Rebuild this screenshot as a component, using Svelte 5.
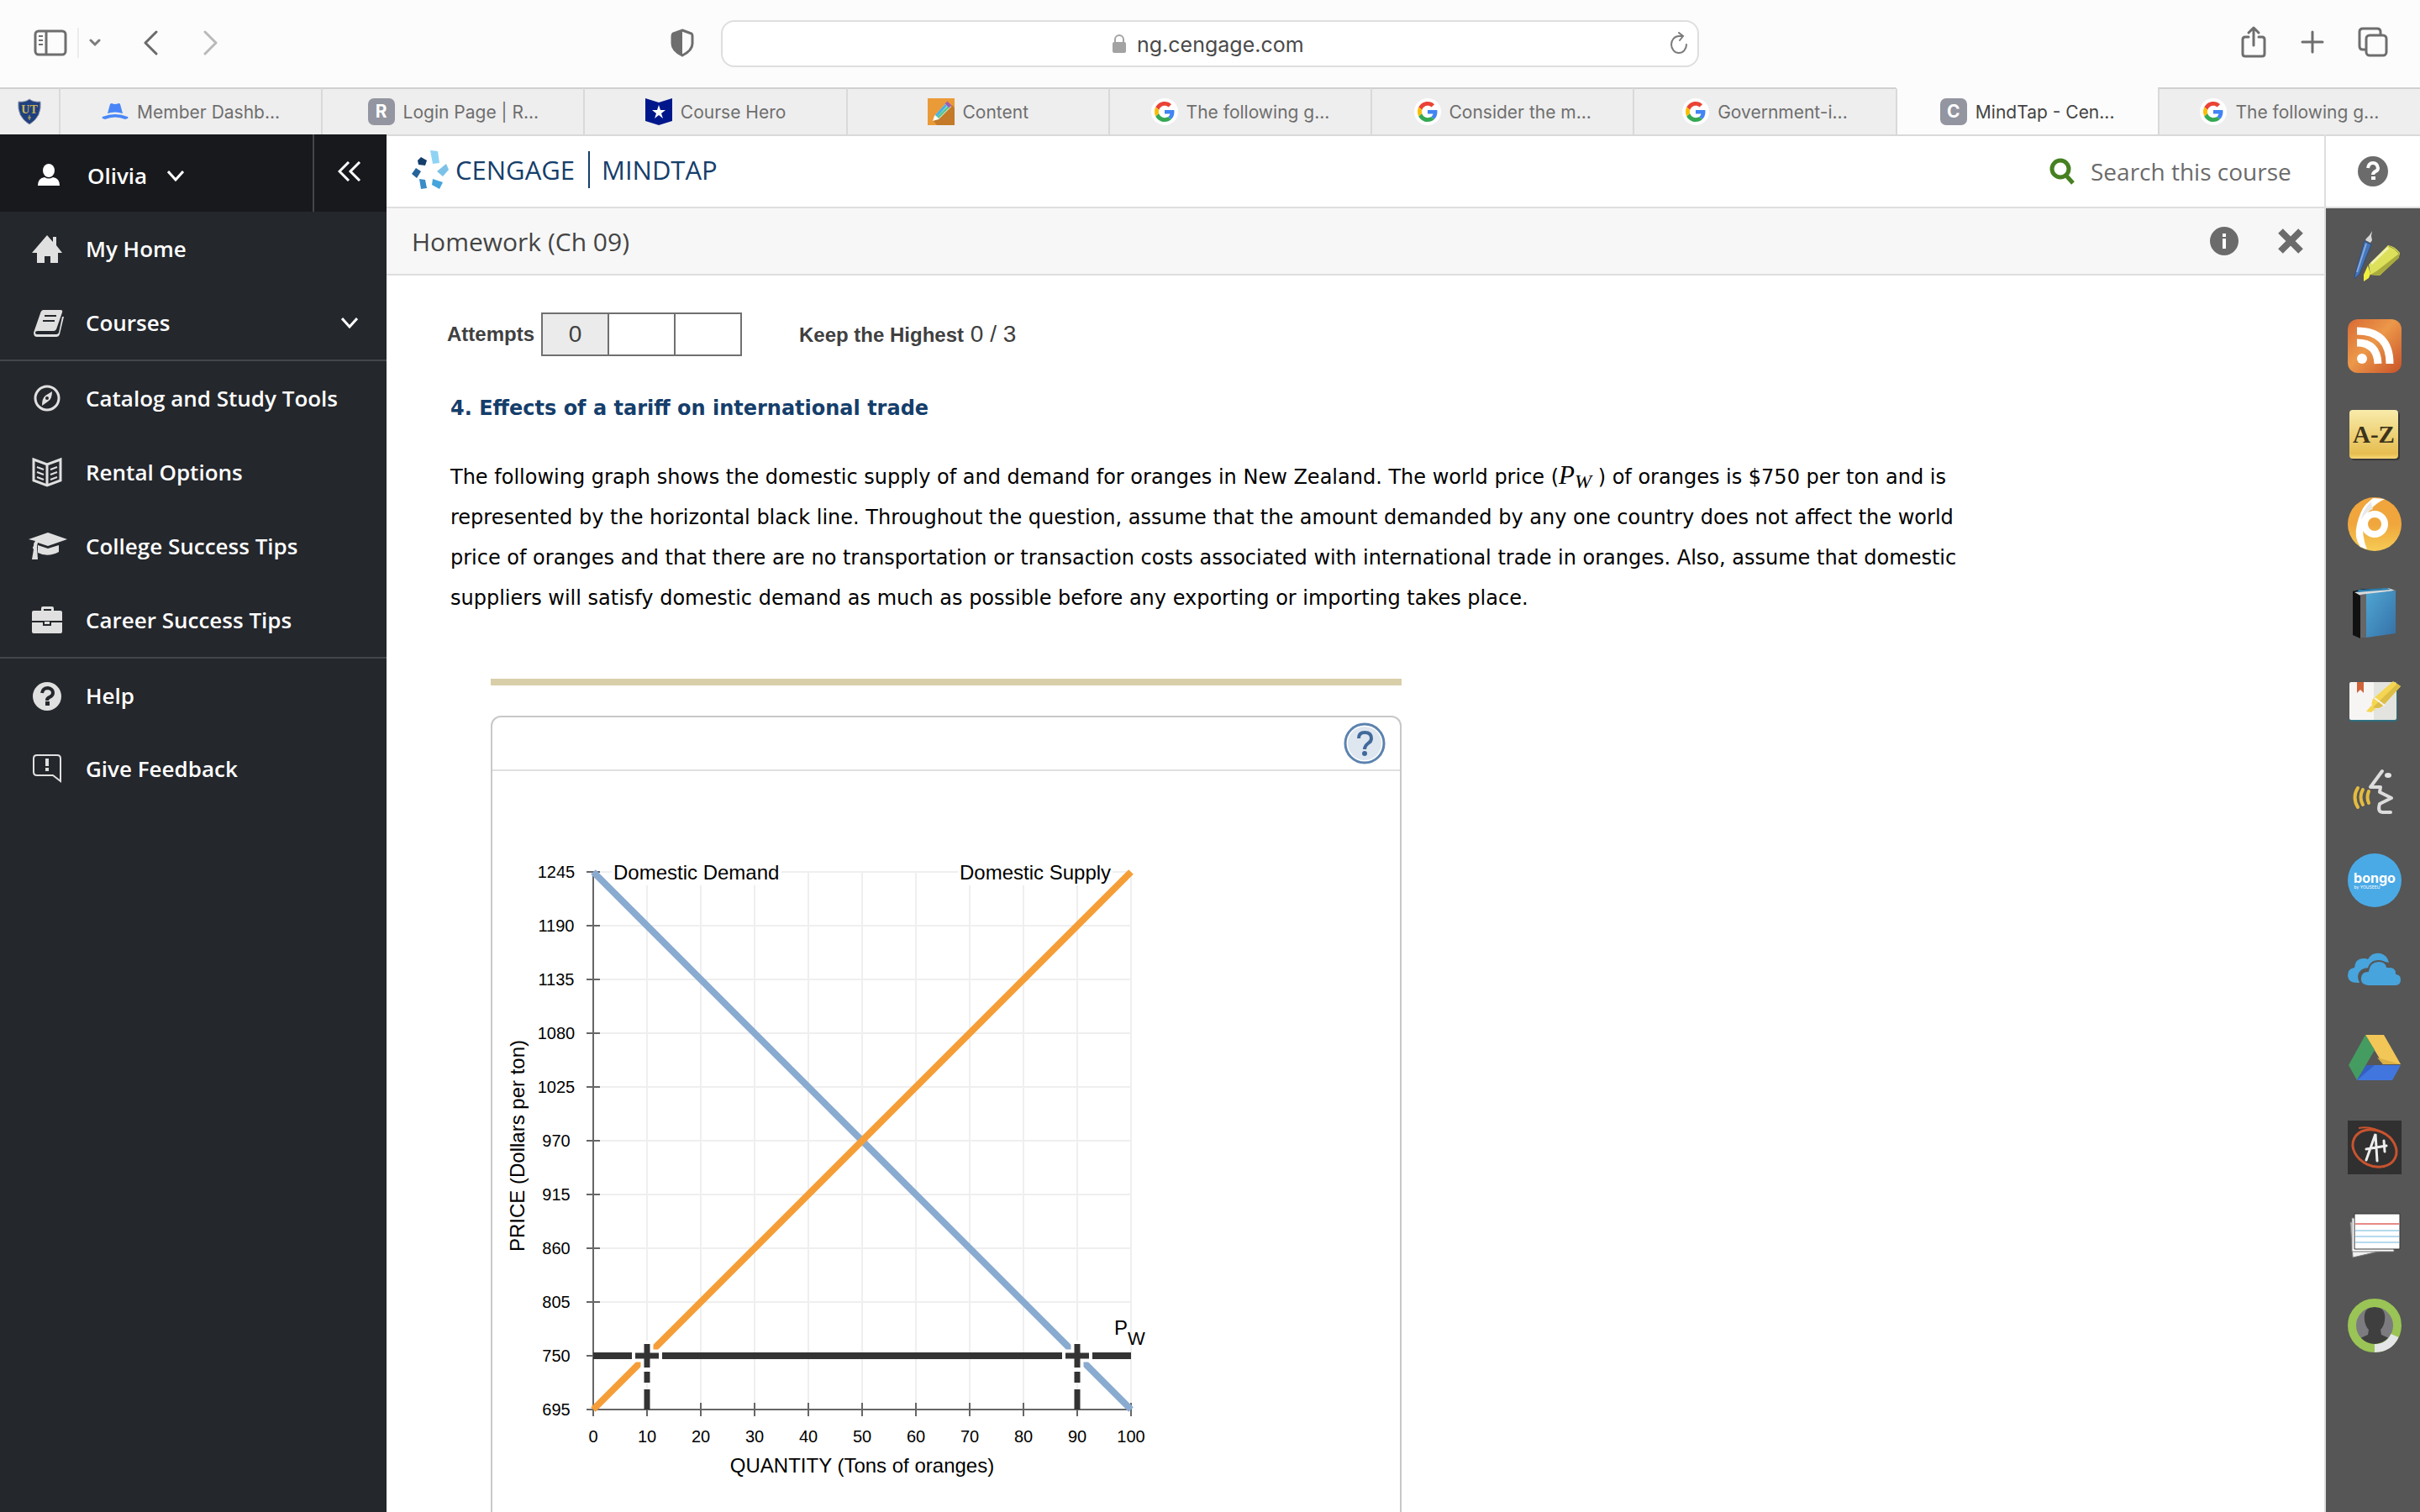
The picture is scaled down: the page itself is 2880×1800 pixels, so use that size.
<script>
  let url = $state('ng.cengage.com');
  let search = $state('');

  const tabs = [
    { icon: 'hat', title: 'Member Dashb...' },
    { icon: 'letter', letter: 'R', title: 'Login Page | R...' },
    { icon: 'hero', title: 'Course Hero' },
    { icon: 'pencil', title: 'Content' },
    { icon: 'google', title: 'The following g...' },
    { icon: 'google', title: 'Consider the m...' },
    { icon: 'google', title: 'Government-i...' },
    { icon: 'letter', letter: 'C', title: 'MindTap - Cen...', active: true },
    { icon: 'google', title: 'The following g...' },
  ];

  const navGroups = [
    [
      { icon: 'home', label: 'My Home' },
      { icon: 'book', label: 'Courses', expandable: true },
    ],
    [
      { icon: 'compass', label: 'Catalog and Study Tools' },
      { icon: 'openbook', label: 'Rental Options' },
      { icon: 'cap', label: 'College Success Tips' },
      { icon: 'case', label: 'Career Success Tips' },
    ],
    [
      { icon: 'help', label: 'Help' },
      { icon: 'feedback', label: 'Give Feedback' },
    ],
  ];

  const tools = ['highlighter', 'rss', 'az', 'swirl', 'bluebook', 'notebook', 'speech', 'bongo', 'onedrive', 'gdrive', 'grade', 'cards', 'profile'];

  // chart scale: 64 units per step on both axes
  const left = 120;
  const top = 120;
  const step = 64;
  const size = step * 10;
  const bottom = top + size;
  const right = left + size;
  const steps = Array.from({ length: 11 }, (_, i) => i);
  const xAt = (q) => left + (q / 100) * size;
  const yAt = (p) => bottom - ((p - 695) / 550) * size;
  const crossings = [10, 90];
</script>

<div class="window">
  <header class="toolbar">
    <div class="tools-left">
      <button class="plain" aria-label="Sidebar">
        <svg width="40" height="32" viewBox="0 0 40 32" fill="none" stroke="#6e6e6e" stroke-width="3">
          <rect x="2" y="2" width="36" height="28" rx="4" />
          <path d="M15 2v28" />
          <path d="M6 8h5M6 13h5M6 18h5" stroke-width="2" />
        </svg>
      </button>
      <i class="tool-sep"></i>
      <button class="plain" aria-label="Tab groups">
        <svg width="14" height="10" viewBox="0 0 14 10" fill="none" stroke="#7c7c7c" stroke-width="3" stroke-linecap="round"><path d="M2 2l5 5 5-5" /></svg>
      </button>
      <button class="plain back" aria-label="Back">
        <svg width="18" height="30" viewBox="0 0 18 30" fill="none" stroke="#6a6a6a" stroke-width="3" stroke-linecap="round" stroke-linejoin="round"><path d="M16 2L3 15l13 13" /></svg>
      </button>
      <button class="plain forward" aria-label="Forward">
        <svg width="18" height="30" viewBox="0 0 18 30" fill="none" stroke="#b9b9b9" stroke-width="3" stroke-linecap="round" stroke-linejoin="round"><path d="M2 2l13 13L2 28" /></svg>
      </button>
      <button class="plain shield" aria-label="Privacy report">
        <svg width="28" height="34" viewBox="0 0 28 34">
          <path d="M14 2l11 4q1 1 1 3v9q0 8-12 14Q2 26 2 18V9q0-2 1-3z" fill="none" stroke="#6e6e6e" stroke-width="3" />
          <path d="M14 1L2 6v13q0 7 12 13z" fill="#6e6e6e" />
        </svg>
      </button>
    </div>
    <form class="address">
      <svg width="18" height="24" viewBox="0 0 18 24">
        <path d="M4 11V7a5 5 0 0 1 10 0v4" fill="none" stroke="#a3a3a3" stroke-width="2" />
        <rect x="1" y="10" width="16" height="13" rx="2" fill="#a3a3a3" />
      </svg>
      <input class="url" aria-label="Address" bind:value={url} />
      <button class="plain reload" type="button" aria-label="Reload">
        <svg width="24" height="28" viewBox="0 0 24 28" fill="none" stroke="#7a7a7a" stroke-width="2" stroke-linecap="round"><path d="M21 15a9 10 0 1 1-9-10h4M12 1l5 4-4 5" /></svg>
      </button>
    </form>
    <div class="tools-right">
      <button class="plain" aria-label="Share">
        <svg width="32" height="40" viewBox="0 0 32 40" fill="none" stroke="#6e6e6e" stroke-width="3" stroke-linecap="round" stroke-linejoin="round"><path d="M10 14H6q-3 0-3 3v17q0 3 3 3h20q3 0 3-3V17q0-3-3-3h-4M16 24V3M10 9l6-6 6 6" /></svg>
      </button>
      <button class="plain" aria-label="New tab">
        <svg width="28" height="28" viewBox="0 0 28 28" fill="none" stroke="#6e6e6e" stroke-width="3" stroke-linecap="round"><path d="M14 2v24M2 14h24" /></svg>
      </button>
      <button class="plain" aria-label="Tab overview">
        <svg width="36" height="36" viewBox="0 0 36 36" fill="none" stroke="#6e6e6e" stroke-width="3"><path d="M9 27H6q-4 0-4-4V6q0-4 4-4h17q4 0 4 4v3" /><rect x="10" y="10" width="24" height="24" rx="4" /></svg>
      </button>
    </div>
  </header>

  <nav class="tabs" aria-label="Tabs">
    <a href="#pinned" class="pinned" aria-label="UT">
      <svg width="30" height="32" viewBox="0 0 30 32">
        <path d="M15 1q5 4 13 3 2 18-13 27Q0 22 2 4q8 1 13-3z" fill="#20407f" stroke="#8a93a8" />
        <text x="15" y="18" text-anchor="middle" font-family="Liberation Serif, serif" font-weight="700" font-size="14" fill="#c9b458">UT</text>
        <path d="M15 20v6M13 23h4" stroke="#c9b458" />
      </svg>
    </a>
    {#each tabs as tab, i}
      <a href="#tab{i}" class="tab" class:active={tab.active}>
        {#if tab.icon === 'letter'}
          <span class="letter">{tab.letter}</span>
        {:else}
          <svg width="32" height="32" viewBox="0 0 32 32">
            {#if tab.icon === 'hat'}
              <path d="M7 18l3-11q1-1 2-1 4 2 8 0 2 0 2 1l3 11q-9-3-18 0z" fill="#4a86f7" />
              <path d="M1 22q15-6 30 0 1 1 0 2l-3 1q-12-5-24 0l-3-1q-1-1 0-2z" fill="#4a86f7" />
            {:else if tab.icon === 'hero'}
              <path d="M0 0l16 5 16-5v27l-16 5-16-5z" fill="#00178c" />
              <path d="M16 8l2 6h6l-5 4 2 6-5-4-5 4 2-6-5-4h6z" fill="#fff" />
            {:else if tab.icon === 'pencil'}
              <path d="M0 0h32v32H0z" fill="#eb9a38" />
              <path d="M6 26L29 8l3 3v21H11z" fill="#c47a28" />
              <path d="M8 21L23 5l5 5-15 15-7 2z" fill="#fff" />
              <path d="M10 21L22 8" stroke="#45aee8" stroke-width="3" />
              <path d="M12 23L25 10" stroke="#58c58c" stroke-width="3" />
              <path d="M22 5l5 5" stroke="#9a5fb8" stroke-width="4" />
            {:else}
              <circle cx="16" cy="16" r="16" fill="#fff" />
              <g transform="translate(4 4) scale(.5)">
                <path fill="#ea4335" d="M24 9.500c3.540 0 6.710 1.220 9.210 3.600l6.850-6.850C35.900 2.380 30.470 0 24 0 14.620 0 6.510 5.380 2.560 13.220l7.980 6.190C12.430 13.720 17.740 9.500 24 9.500z" />
                <path fill="#4285f4" d="M46.980 24.550c0-1.570-.15-3.090-.38-4.550H24v9.020h12.940c-.58 2.960-2.260 5.480-4.780 7.180l7.730 6c4.510-4.180 7.090-10.360 7.090-17.650z" />
                <path fill="#fbbc05" d="M10.530 28.590c-.48-1.450-.76-2.990-.76-4.590s.27-3.140.76-4.590l-7.980-6.190C.92 16.460 0 20.120 0 24s.92 7.540 2.560 10.780l7.970-6.190z" />
                <path fill="#34a853" d="M24 48c6.480 0 11.930-2.130 15.890-5.810l-7.730-6c-2.150 1.450-4.920 2.300-8.160 2.300-6.260 0-11.570-4.220-13.470-9.910l-7.980 6.190C6.510 42.620 14.620 48 24 48z" />
              </g>
            {/if}
          </svg>
        {/if}
        <span>{tab.title}</span>
      </a>
    {/each}
  </nav>

  <div class="page">
    <aside class="sidebar">
      <div class="user-row">
        <button class="plain user">
          <svg width="48" height="34" viewBox="0 0 48 34" fill="#fff"><ellipse cx="26" cy="11" rx="7" ry="8" /><path d="M13 29q0-9 8-10 5 3 10 0 8 1 8 10z" /></svg>
          <span>Olivia</span>
          <svg width="20" height="13" viewBox="0 0 20 13" fill="none" stroke="#fff" stroke-width="3"><path d="M1 1l9 10 9-10" /></svg>
        </button>
        <button class="plain collapse" aria-label="Collapse menu">
          <svg width="28" height="24" viewBox="0 0 28 24" fill="none" stroke="#fff" stroke-width="3"><path d="M13 1L2 12l11 11M26 1L15 12l11 11" /></svg>
        </button>
      </div>
      {#each navGroups as group}
        <ul>
          {#each group as item}
            <li>
              <a href="#{item.icon}">
                <svg width="48" height="40" viewBox="0 0 48 40" fill="#e0e0e0">
                  {#if item.icon === 'home'}
                    <path d="M24 4l7 8V6h4v10l7 9h-5v12h-9v-8h-7v8h-9V25H6z" />
                  {:else if item.icon === 'book'}
                    <path d="M20 5h20q3 0 2 3l-7 20q-1 2-3 2H13q-3 0-3 2t3 2h22q2 0 3-2l4-19 2 0-5 21q-1 3-4 3H12q-4 0-4-5l8-23q1-4 4-4z" />
                    <path d="M21 12h14M19 18h14" stroke="#24272c" stroke-width="2" />
                  {:else if item.icon === 'compass'}
                    <circle cx="24" cy="20" r="14" fill="none" stroke="#e0e0e0" stroke-width="3" />
                    <path d="M30 12q0 9-5 12l-7 5q0-9 4-12z" />
                    <circle cx="24" cy="20" r="2" fill="#24272c" />
                  {:else if item.icon === 'openbook'}
                    <g fill="none" stroke="#e0e0e0"><path d="M8 5l16 6 16-6v25l-16 6-16-6zM24 11v25" stroke-width="3" /><path d="M12 14l8 3M12 20l8 3M12 26l8 3M36 14l-8 3M36 20l-8 3M36 26l-8 3" stroke-width="2" /></g>
                  {:else if item.icon === 'cap'}
                    <path d="M25 4l23 8-23 8-12-4q-1 3-1 6l1 14H6l2-12q-2-2 0-4 0-4 2-6l-8-2z" />
                    <path d="M13 19l12 4 13-4v8q-13 7-25 1z" />
                  {:else if item.icon === 'case'}
                    <path d="M17 9V6q0-2 2-2h11q2 0 2 2v3h8q2 0 2 2v10H6V11q0-2 2-2zM20 9h9V7h-9zM6 23h13v4h10v-4h13v11q0 2-2 2H8q-2 0-2-2z" fill-rule="evenodd" />
                    <path d="M21 22h6v3h-6z" />
                  {:else if item.icon === 'help'}
                    <circle cx="24" cy="21" r="17" />
                    <path d="M18 17q1-6 7-6 6 1 6 6 0 3-4 5-3 1-3 4" fill="none" stroke="#24272c" stroke-width="4" />
                    <path d="M22 27h5v5h-5z" fill="#24272c" />
                  {:else}
                    <path d="M12 4h24q4 0 4 4v27l-9-7H12q-4 0-4-4V8q0-4 4-4z" fill="none" stroke="#e0e0e0" stroke-width="2" />
                    <path d="M22 8h4v9h-4zM22 19h4v4h-4z" />
                  {/if}
                </svg>
                <span>{item.label}</span>
                {#if item.expandable}
                  <svg class="expand" width="20" height="13" viewBox="0 0 20 13" fill="none" stroke="#fff" stroke-width="3"><path d="M1 1l9 10 9-10" /></svg>
                {/if}
              </a>
            </li>
          {/each}
        </ul>
      {/each}
    </aside>

    <main>
      <div class="brand-bar">
        <a class="brand" href="#home">
          <svg width="44" height="46" viewBox="0 0 44 46">
            <path d="M22 0l9 1 2 14-8 1z" fill="#8fd3f4" />
            <path d="M11 8l7 4-2 6-8-1-1-5z" fill="#153e6b" />
            <path d="M5 21l6 4-5 8-6-5z" fill="#26649a" />
            <path d="M41 16l3 7-7 8-7-6z" fill="#7cc2e8" />
            <path d="M9 34l7 1 2 10-7 1z" fill="#3a8cc7" />
            <path d="M25 34l12 4-4 8-9-5z" fill="#45a4dc" />
          </svg>
          <span class="cengage">CENGAGE</span>
          <span class="mindtap">MINDTAP</span>
        </a>
        <label class="search">
          <svg width="32" height="32" viewBox="0 0 32 32" fill="none" stroke="#468021" stroke-width="5"><circle cx="14" cy="13" r="10" /><path d="M20 20l9 10" /></svg>
          <input placeholder="Search this course" aria-label="Search this course" bind:value={search} />
        </label>
      </div>

      <div class="title-bar">
        <h1>Homework (Ch 09)</h1>
        <button class="plain" aria-label="Information">
          <svg width="34" height="34" viewBox="0 0 34 34"><circle cx="17" cy="17" r="17" fill="#6b6b6b" /><path d="M15 8h4v4h-4zM15 14h4v12h-4z" fill="#fff" /></svg>
        </button>
        <button class="plain" aria-label="Close">
          <svg width="32" height="32" viewBox="0 0 32 32" stroke="#6b6b6b" stroke-width="8"><path d="M4 4l24 24M28 4L4 28" /></svg>
        </button>
      </div>

      <div class="content">
        <div class="attempts">
          <b>Attempts</b>
          <div class="boxes"><span class="used">0</span><span></span><span></span></div>
          <p><b>Keep the Highest</b> 0 / 3</p>
        </div>

        <article>
          <h2>4. Effects of a tariff on international trade</h2>
          <p class="question">
            The following graph shows the domestic supply of and demand for oranges in New Zealand. The world price (<i class="math">P<sub>W</sub></i> ) of oranges is $750 per ton and is represented by the horizontal black line. Throughout the question, assume that the amount demanded by any one country does not affect the world price of oranges and that there are no transportation or transaction costs associated with international trade in oranges. Also, assume that domestic suppliers will satisfy domestic demand as much as possible before any exporting or importing takes place.
          </p>
        </article>

        <section class="figure">
          <div class="rule"></div>
          <div class="panel">
            <div class="panel-head">
              <button class="plain" aria-label="Graph help">
                <svg width="50" height="50" viewBox="0 0 50 50">
                  <circle cx="25" cy="25" r="23" fill="#fff" stroke="#5c83b0" stroke-width="3" />
                  <circle cx="25" cy="25" r="20" fill="#dee6ef" />
                  <path d="M18 19q0-7 7-7 8 0 8 7 0 4-4 6-4 3-4 7" fill="none" stroke="#41699b" stroke-width="4" />
                  <circle cx="25" cy="37" r="3" fill="#41699b" />
                </svg>
              </button>
            </div>
            <svg class="chart" viewBox="0 0 1080 900" role="img" aria-label="Supply and demand for oranges">
              <g stroke="#efefef" stroke-width="2">
                {#each steps as s}
                  <path d="M{left} {top + s * step}H{right}M{left + s * step} {top}V{bottom}" />
                {/each}
              </g>
              <g stroke="#666" stroke-width="2" fill="none">
                <path d="M{left} {top}V{bottom}H{right}" />
                {#each steps as s}
                  <path d="M{left - 8} {top + s * step}h16M{left + s * step} {bottom - 8}v16" />
                {/each}
              </g>
              <g font-size="20" text-anchor="middle">
                {#each steps as s}
                  <text x="76" y={bottom - s * step + 7}>{695 + s * 55}</text>
                  <text x={left + s * step} y="799">{s * 10}</text>
                {/each}
              </g>
              <rect x="142" y="108" width="202" height="28" fill="#fff" />
              <rect x="554" y="108" width="184" height="28" fill="#fff" />
              <g stroke-width="8">
                <path d="M{xAt(0)} {yAt(1245)}L{xAt(100)} {yAt(695)}" stroke="#8aabd0" />
                <path d="M{xAt(0)} {yAt(695)}L{xAt(100)} {yAt(1245)}" stroke="#f59e38" />
                <path d="M{xAt(0)} {yAt(750)}H{right}" stroke="#333" />
              </g>
              {#each crossings as q}
                <path d="M{xAt(q)} {yAt(750) - 18}v36M{xAt(q) - 18} {yAt(750)}h36" stroke="#fff" stroke-width="15" />
                <path d="M{xAt(q)} {yAt(750) - 14}v28M{xAt(q) - 14} {yAt(750)}h28M{xAt(q)} {yAt(750) + 19}v13M{xAt(q)} {yAt(750) + 40}v24" stroke="#333" stroke-width="7" />
              {/each}
              <g font-size="24">
                <text x="144" y="129">Domestic Demand</text>
                <text x="556" y="129">Domestic Supply</text>
                <text x="740" y="671">P<tspan dy="12" font-size="22">W</tspan></text>
                <text x="440" y="835" text-anchor="middle">QUANTITY (Tons of oranges)</text>
                <text transform="translate(38 446) rotate(-90)" text-anchor="middle">PRICE (Dollars per ton)</text>
              </g>
            </svg>
          </div>
        </section>
      </div>
    </main>

    <aside class="rail">
      <div class="rail-head">
        <button class="plain" aria-label="Help">
          <svg width="36" height="36" viewBox="0 0 36 36"><circle cx="18" cy="18" r="18" fill="#6b6b6b" /><path d="M12 14q1-6 6-6t6 6q0 3-3 4-3 2-3 4" fill="none" stroke="#fff" stroke-width="4" /><path d="M16 24h5v4h-5z" fill="#fff" /></svg>
        </button>
      </div>
      <div class="rail-tools">
        {#each tools as tool}
          <button class="plain" aria-label={tool}>
            <svg width="64" height="64" viewBox="0 0 64 64">
              {#if tool === 'highlighter'}
                <path d="M20 13l8 4-14 35-6 6 1-7z" fill="#4575b8" stroke="#2c4f82" />
                <path d="M22 10l4-4 3-5-1 6 1 5-2 3-6-3z" fill="#d8d8d8" />
                <path d="M22 16L11 50" stroke="#86a9dd" stroke-width="2" />
                <path d="M25 41L48 18q8 1 14 9l-1 5-23 22-11-1z" fill="#dde05a" />
                <path d="M61 28v5L38 54l-11-1 7-4z" fill="#a9ab3d" />
                <path d="M49 19q7 2 12 9" fill="none" stroke="#8f9135" />
                <path d="M28 40l20-19" stroke="#f1f2b0" stroke-width="3" />
                <path d="M24 42l-5 11v8l6-4 2-5z" fill="#f0f03f" />
              {:else if tool === 'rss'}
                <defs>
                  <linearGradient id="rss" x1="0" y1="0" x2="1" y2="1"><stop offset="0" stop-color="#d86a34" /><stop offset=".45" stop-color="#ec984a" /><stop offset="1" stop-color="#c85228" /></linearGradient>
                </defs>
                <rect width="64" height="64" rx="12" fill="url(#rss)" />
                <circle cx="17" cy="47" r="6" fill="#fff" />
                <path d="M11 28q24 0 25 25M11 14q39 0 39 39" fill="none" stroke="#fff" stroke-width="9" />
              {:else if tool === 'az'}
                <defs>
                  <linearGradient id="az" x1="0" y1="0" x2="0" y2="1"><stop offset="0" stop-color="#f8ebaa" /><stop offset=".9" stop-color="#e6bd50" /><stop offset="1" stop-color="#f8d875" /></linearGradient>
                </defs>
                <rect x="4" y="4" width="58" height="58" rx="4" fill="#383838" />
                <rect x="2" y="2" width="58" height="58" rx="4" fill="url(#az)" />
                <text x="31" y="41" text-anchor="middle" font-family="Liberation Serif, serif" font-weight="700" font-size="29" fill="#3d341a">A-Z</text>
              {:else if tool === 'swirl'}
                <defs>
                  <linearGradient id="swirl" x1="0" y1="0" x2="0" y2="1"><stop offset=".5" stop-color="#f0a63c" /><stop offset="1" stop-color="#f6cb55" /></linearGradient>
                </defs>
                <circle cx="32" cy="32" r="32" fill="url(#swirl)" />
                <path d="M30 1l14 1Q24 12 19 29q-3 16 4 33l-8-3Q7 48 11 32 15 16 21 9z" fill="#fff" />
                <circle cx="32" cy="32" r="12" fill="none" stroke="#fff" stroke-width="8" />
                <path d="M28 5Q18 14 16 27q5-10 14-13-2-4-2-9z" fill="#e8e8e8" />
              {:else if tool === 'bluebook'}
                <defs>
                  <linearGradient id="cover" x1="0" y1="0" x2="1" y2="1"><stop offset="0" stop-color="#4ea6d4" /><stop offset="1" stop-color="#3671a6" /></linearGradient>
                </defs>
                <path d="M6 6l12-3 38 1v50l-41 8-9-4z" fill="#111" />
                <path d="M8 7l40-5 9 3-40 7z" fill="#d8dadc" />
                <path d="M13 4l34-2 4 2-40 3z" fill="#2c7fae" />
                <path d="M15 10l7-1v52l-7 1z" fill="#666" />
                <path d="M22 9l35-4v51l-35 5z" fill="url(#cover)" />
              {:else if tool === 'notebook'}
                <rect x="2" y="9" width="57" height="46" rx="3" fill="#2e6f80" />
                <path d="M4 8h27v45H4q-2 0-2-2V10q0-2 2-2z" fill="#f7f5f3" />
                <path d="M31 8h25q2 0 2 2v41q0 2-2 2H31z" fill="#e3e4df" />
                <path d="M11 8h8v13l-4-4-4 4z" fill="#d0623a" />
                <path d="M30 28L54 7l9 6-20 22q-6 6-13 3-3-3 0-10zM28 36l5 4-5 4-6-1z" fill="#f5d652" />
                <path d="M63 13L43 35q-6 6-13 3l29-28z" fill="#dcbd45" />
                <path d="M32 27l12 9" stroke="#f7f5f3" stroke-width="2" />
              {:else if tool === 'speech'}
                <g fill="none" stroke-linecap="round">
                  <g stroke="#e4bc3e" stroke-width="4"><path d="M12 28q-7 11 0 23M18 30q-5 9 0 18M25 32q-3 7 0 14" /></g>
                  <path d="M41 8L27 27h12l-1 6 14 7-14 7q-3 10 4 10h9" stroke="#dcdcdc" stroke-width="4" stroke-linejoin="round" />
                </g>
                <ellipse cx="48" cy="13" rx="4" ry="3" fill="#e4e4e4" />
              {:else if tool === 'bongo'}
                <circle cx="32" cy="32" r="32" fill="#4aaae6" />
                <text x="32" y="35" text-anchor="middle" font-size="16" font-weight="700" font-family="Inter, sans-serif" fill="#fff">bongo</text>
                <text x="23" y="42" text-anchor="middle" font-size="5" font-family="Inter, sans-serif" fill="#fff">by YOUSEEU</text>
              {:else if tool === 'onedrive'}
                <path d="M12 48Q0 48 0 39q0-8 8-9 1-12 12-11 2 0 4 1 5-9 15-7 8 2 10 11-14-5-22 6-13-1-15 10 0 4 2 8z" fill="#47a4dc" />
                <path d="M24 52q-10-1-9-10 1-8 9-8 2-12 13-12 8 0 10 7 11-1 11 8 6 1 6 7 0 8-7 8z" fill="#47a4dc" stroke="#565656" stroke-width="2" />
              {:else if tool === 'gdrive'}
                <path d="M21 4h22l20 35H42z" fill="#f2c657" />
                <path d="M21 4l11 18-21 36L1 40z" fill="#459c60" />
                <path d="M22 40h41L53 58H11z" fill="#4176df" />
                <path d="M42 39l-7-8 28 8z" fill="#dcb044" />
                <path d="M22 40l10 0-21 18z" fill="#345fc2" />
              {:else if tool === 'grade'}
                <path d="M0 0h64v64H0z" fill="#303030" />
                <ellipse cx="32" cy="33" rx="27" ry="21" transform="rotate(25 32 33)" fill="none" stroke="#c9532e" stroke-width="3" />
                <path d="M13 9q16-3 31 7" fill="none" stroke="#c9532e" stroke-width="2" />
                <g fill="none" stroke="#eee" stroke-width="3" stroke-linecap="round"><path d="M22 47l11-31 2 32M22 34l24-4M43 24l1 13" /></g>
              {:else if tool === 'cards'}
                <path d="M3 15l50-3 5 33-52 12z" fill="#f0f0f0" stroke="#777" />
                <path d="M5 10h50v40H5z" fill="#fff" stroke="#777" />
                <path d="M8 5h54v42H8z" fill="#fff" stroke="#333" />
                <path d="M9 17h52" stroke="#e88a86" stroke-width="2" />
                <path d="M9 25h52M9 32h52M9 39h52" stroke="#b5daee" stroke-width="2" />
              {:else}
                <circle cx="32" cy="32" r="23" fill="#7c7c80" />
                <path d="M32 10q14 0 12 16-1 7-5 11l1 6 9 4q-7 8-17 8t-17-8l9-4 1-6q-4-4-5-11-2-16 12-16z" fill="#3f3f3f" />
                <circle cx="32" cy="32" r="27" fill="none" stroke="#9ac455" stroke-width="10" />
                <path d="M32 59q17 0 24-15" fill="none" stroke="#e4e6e8" stroke-width="10" />
              {/if}
            </svg>
          </button>
        {/each}
      </div>
    </aside>
  </div>
</div>

<style>
  :global(body) {
    margin: 0;
    background: #fff;
  }
  .window {
    height: 100vh;
    display: flex;
    flex-direction: column;
    font-family: 'Open Sans', 'Noto Sans', sans-serif;
    overflow: hidden;
  }
  .window * {
    box-sizing: border-box;
  }
  svg {
    display: block;
    flex-shrink: 0;
  }
  a {
    color: inherit;
    text-decoration: none;
  }
  .plain {
    display: flex;
    align-items: center;
    padding: 0;
    border: 0;
    background: none;
    color: inherit;
    font: inherit;
    cursor: pointer;
  }

  /* browser chrome */
  .toolbar {
    flex-shrink: 0;
    display: grid;
    grid-template-columns: 1fr minmax(0, 1164px) 1fr;
    align-items: center;
    height: 104px;
    background: #fcfcfc;
    font-family: Inter, sans-serif;
  }
  .tools-left {
    display: flex;
    align-items: center;
    padding: 0 32px 2px 40px;
    gap: 12px;
  }
  .tool-sep {
    width: 2px;
    height: 36px;
    background: #ececec;
  }
  .back {
    margin-left: 38px;
  }
  .forward {
    margin-left: 42px;
  }
  .shield {
    margin-left: auto;
  }
  .address {
    position: relative;
    display: flex;
    align-items: center;
    justify-content: center;
    gap: 12px;
    height: 56px;
    border: 2px solid #dedede;
    border-radius: 16px;
    background: #fff;
  }
  .url {
    width: 204px;
    padding: 2px 0 0;
    border: 0;
    outline: 0;
    background: none;
    font: 25px Inter, sans-serif;
    color: #4a4a4a;
  }
  .reload {
    position: absolute;
    right: 10px;
    top: 12px;
  }
  .tools-right {
    display: flex;
    align-items: center;
    justify-content: flex-end;
    gap: 40px;
    padding: 0 38px 4px 0;
  }
  .tabs {
    flex-shrink: 0;
    display: flex;
    height: 56px;
    background: #eee;
    font: 21px Inter, sans-serif;
    color: #6e6e6e;
  }
  .pinned {
    display: flex;
    align-items: center;
    justify-content: center;
    width: 70px;
    border-top: 2px solid #d0d0d0;
  }
  .tab {
    flex: 1 1 0;
    min-width: 0;
    display: flex;
    align-items: center;
    justify-content: center;
    gap: 10px;
    border-left: 2px solid #d9d9d9;
    border-top: 2px solid #d0d0d0;
    white-space: nowrap;
  }
  .tab.active {
    background: #fcfcfc;
    border-top-color: #fcfcfc;
    color: #444;
  }
  .letter {
    width: 32px;
    height: 32px;
    border-radius: 7px;
    background: #9395a0;
    color: #fff;
    font-weight: 700;
    line-height: 32px;
    text-align: center;
  }

  .page {
    flex: 1;
    min-height: 0;
    display: flex;
  }

  /* left menu */
  .sidebar {
    flex: 0 0 460px;
    background: #24272c;
    color: #fff;
    font-size: 26px;
    font-weight: 600;
  }
  .user-row {
    display: flex;
    height: 92px;
    background: #18191d;
  }
  .user {
    flex: 1;
    gap: 24px;
    padding: 6px 0 0 32px;
  }
  .collapse {
    width: 88px;
    padding: 0 0 4px 28px;
    border-left: 2px solid #43464a;
  }
  .sidebar ul {
    margin: 0;
    padding: 0;
    list-style: none;
  }
  .sidebar ul + ul {
    border-top: 2px solid #43464a;
  }
  .sidebar li a {
    display: flex;
    align-items: center;
    gap: 22px;
    height: 88px;
    padding: 0 34px 0 32px;
  }
  .sidebar ul:last-child a {
    height: 87px;
  }
  .expand {
    margin-left: auto;
  }

  /* course area */
  main {
    flex: 1;
    min-width: 0;
    display: flex;
    flex-direction: column;
    border-right: 2px solid #dedede;
  }
  .brand-bar {
    flex-shrink: 0;
    display: flex;
    align-items: center;
    justify-content: space-between;
    height: 88px;
    padding: 0 30px;
    border-top: 2px solid #d9d9d9;
    border-bottom: 2px solid #dedede;
  }
  .brand {
    display: flex;
    align-items: center;
    padding-bottom: 4px;
    color: #153e6b;
    font-size: 31px;
    line-height: 44px;
  }
  .cengage {
    margin-left: 8px;
    padding-right: 16px;
    border-right: 2px solid #153e6b;
  }
  .mindtap {
    padding-left: 14px;
  }
  .search {
    display: flex;
    align-items: center;
    gap: 18px;
  }
  .search input {
    width: 248px;
    padding: 0;
    border: 0;
    outline: 0;
    font: 28px 'Open Sans', sans-serif;
    color: #333;
  }
  .search input::placeholder {
    color: #6b6b6b;
    opacity: 1;
  }
  .title-bar {
    flex-shrink: 0;
    display: flex;
    align-items: center;
    gap: 46px;
    height: 80px;
    padding: 0 24px 0 30px;
    background: #f7f7f7;
    border-bottom: 2px solid #dedede;
  }
  h1 {
    flex: 1;
    margin: 0;
    font-size: 30px;
    font-weight: 400;
    color: #444;
  }
  .content {
    flex: 1;
    min-height: 0;
    overflow-y: auto;
    scrollbar-width: none;
    padding: 44px 72px 0;
  }
  .attempts {
    display: flex;
    align-items: center;
    gap: 8px;
    font-family: 'Liberation Sans', Arial, sans-serif;
    font-size: 28px;
    color: #404040;
  }
  .attempts b {
    font-size: 24px;
  }
  .attempts p {
    margin: 0 0 0 60px;
  }
  .boxes {
    display: flex;
    border: 2px solid #707070;
  }
  .boxes span {
    width: 79px;
    height: 48px;
    line-height: 48px;
    text-align: center;
  }
  .boxes span + span {
    border-left: 2px solid #707070;
  }
  .boxes .used {
    width: 77px;
    background: #ebebeb;
  }
  article {
    margin: 38px 0 0 4px;
    max-width: 1810px;
    font: 24px/48px 'DejaVu Sans', Verdana, sans-serif;
    color: #000;
  }
  h2 {
    margin: 0 0 34px;
    font-size: 24px;
    color: #153e6b;
  }
  .question {
    margin: 0;
  }
  .math {
    font: italic 31px/24px 'Liberation Serif', serif;
  }
  .math sub {
    font-size: 24px;
    line-height: 0;
    vertical-align: -5px;
  }
  .figure {
    max-width: 1084px;
    margin: 72px 0 0 52px;
  }
  .rule {
    height: 8px;
    background: #d8cea8;
  }
  .panel {
    margin-top: 36px;
    border: 2px solid #c8c8c8;
    border-radius: 12px;
  }
  .panel-head {
    display: flex;
    justify-content: flex-end;
    align-items: center;
    height: 64px;
    padding-right: 17px;
    border-bottom: 2px solid #dfdfdf;
  }
  .chart {
    width: 100%;
    font-family: 'Liberation Sans', Arial, sans-serif;
  }

  /* tool rail */
  .rail {
    flex: 0 0 112px;
    display: flex;
    flex-direction: column;
  }
  .rail-head {
    display: flex;
    align-items: center;
    justify-content: center;
    height: 88px;
    border-top: 2px solid #d9d9d9;
    border-bottom: 2px solid #dedede;
  }
  .rail-tools {
    flex: 1;
    display: flex;
    flex-direction: column;
    align-items: center;
    gap: 42px;
    padding: 26px 0 0 4px;
    background: #565656;
  }
</style>
